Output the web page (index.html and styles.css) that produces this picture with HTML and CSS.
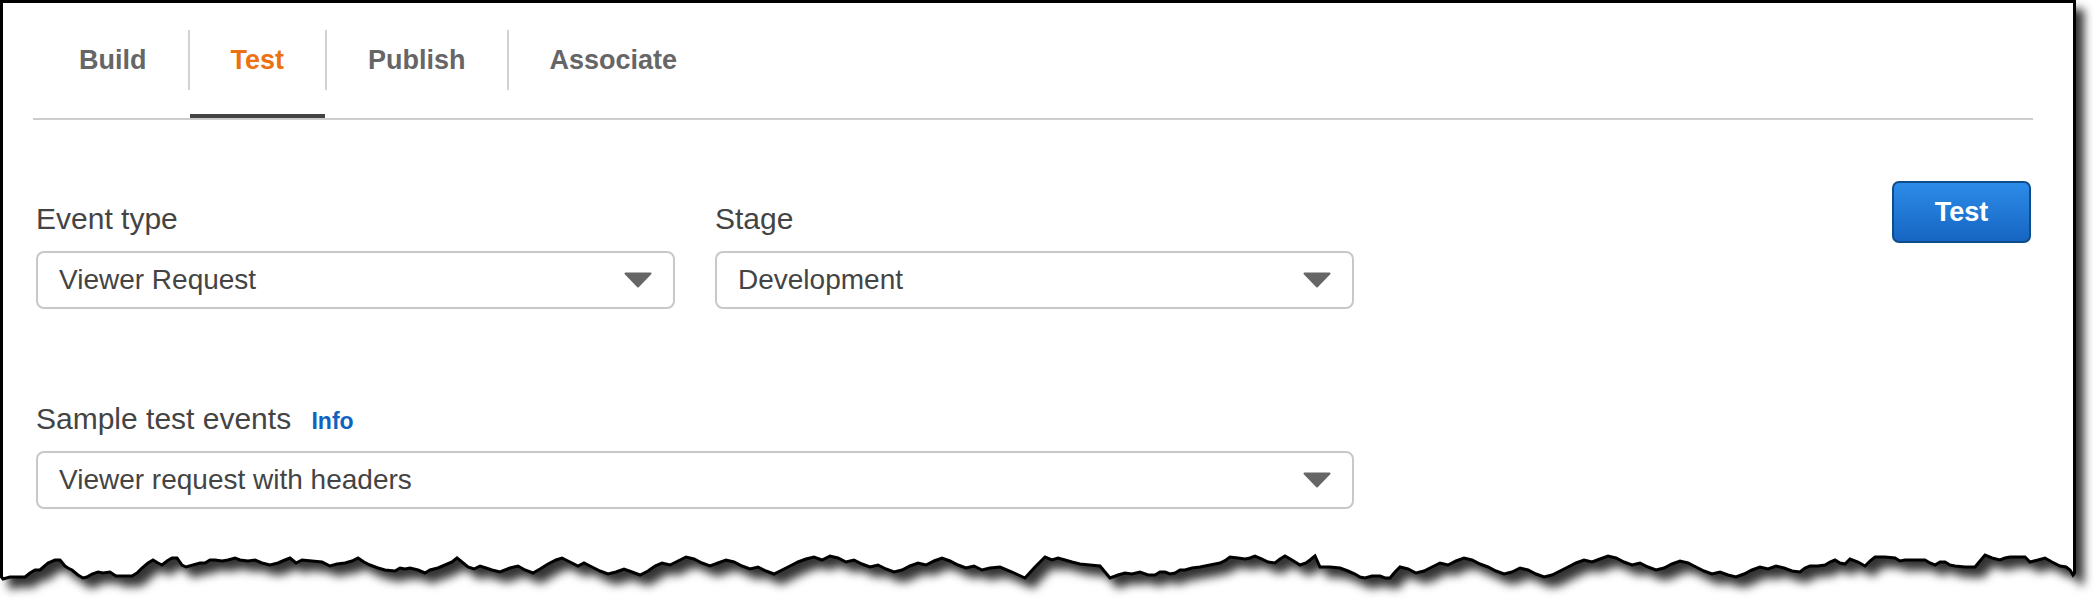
FILE: index.html
```html
<!DOCTYPE html>
<html lang="en">
<head>
<meta charset="utf-8">
<title>Function test</title>
<link rel="stylesheet" href="styles.css">
</head>
<body>
<div class="paper">
  <svg class="paper-bg" width="2096" height="602" viewBox="0 0 2096 602" aria-hidden="true">
    <defs>
      <filter id="shadow" x="-5%" y="-5%" width="115%" height="130%">
        <feDropShadow dx="8" dy="9" stdDeviation="5" flood-color="#000" flood-opacity="0.8"/>
      </filter>
    </defs>
    <path filter="url(#shadow)" fill="#fff" stroke="#000" stroke-width="3" stroke-linejoin="miter"
      d="M2074.5 1.5 H1.5 V577 L3 579 L10 577 L25 577 L30 573 L35 570 L40 570 L48 563 L55 560 L60 560 L65 566 L68 568 L72 570 L78 575 L83 578 L87 577 L92 574 L98 572 L103 573 L110 572 L116 576 L132 576 L137 573 L142 568 L148 563 L153 560 L158 563 L162 565 L167 561 L172 558 L177 558 L182 565 L186 567 L200 563 L205 563 L210 560 L215 560 L222 561 L228 560 L235 558 L240 560 L248 561 L255 560 L262 563 L270 565 L278 563 L285 560 L290 558 L296 563 L302 560 L312 561 L322 562 L330 566 L337 564 L345 563 L352 561 L358 558 L364 562 L370 565 L378 568 L385 570 L395 571 L400 568 L405 569 L410 568 L418 570 L425 573 L430 570 L438 568 L445 565 L452 562 L457 558 L462 562 L468 567 L474 569 L480 566 L486 568 L492 570 L500 572 L510 568 L518 566 L525 570 L533 573 L540 569 L548 564 L556 560 L562 558 L570 562 L578 566 L584 563 L592 567 L600 571 L608 574 L616 572 L624 569 L632 572 L640 575 L648 571 L655 566 L662 563 L670 565 L678 561 L686 557 L694 559 L702 563 L710 566 L718 563 L726 560 L734 562 L742 566 L750 569 L758 567 L766 571 L774 574 L782 570 L790 566 L798 562 L806 559 L814 557 L822 560 L830 556 L838 558 L846 562 L854 560 L862 564 L870 567 L878 565 L886 569 L894 572 L902 570 L910 566 L918 563 L926 565 L934 561 L942 558 L950 561 L958 565 L966 568 L974 566 L982 570 L990 568 L1000 567 L1012 572 L1025 578 L1035 567 L1045 557 L1052 560 L1058 558 L1065 560 L1072 562 L1080 564 L1090 565 L1100 566 L1105 572 L1110 578 L1118 575 L1125 573 L1132 574 L1140 572 L1148 575 L1155 575 L1160 572 L1165 572 L1170 574 L1175 573 L1180 570 L1185 570 L1192 568 L1200 567 L1210 565 L1220 563 L1226 560 L1230 557 L1238 558 L1245 559 L1250 558 L1255 556 L1262 559 L1268 562 L1275 563 L1280 559 L1285 556 L1292 560 L1300 565 L1306 563 L1310 560 L1315 556 L1320 567 L1330 567 L1340 568 L1348 571 L1355 574 L1360 577 L1365 578 L1372 576 L1380 576 L1385 578 L1390 578 L1395 572 L1400 567 L1408 569 L1416 573 L1424 571 L1432 567 L1440 563 L1448 565 L1456 561 L1464 558 L1472 560 L1480 564 L1488 567 L1496 571 L1504 574 L1512 572 L1520 568 L1528 570 L1536 574 L1544 577 L1552 575 L1560 571 L1568 567 L1576 563 L1584 560 L1592 562 L1600 559 L1608 556 L1616 558 L1624 562 L1632 565 L1640 563 L1648 567 L1656 570 L1664 568 L1672 564 L1680 561 L1688 563 L1696 567 L1704 571 L1712 574 L1720 572 L1728 575 L1736 577 L1744 574 L1752 570 L1760 567 L1768 569 L1776 566 L1784 568 L1792 571 L1800 572 L1805 568 L1810 566 L1818 566 L1825 565 L1830 562 L1835 560 L1840 563 L1845 564 L1850 559 L1858 562 L1865 566 L1870 561 L1875 557 L1885 557 L1895 558 L1900 561 L1905 560 L1915 560 L1925 560 L1930 563 L1935 565 L1940 562 L1945 562 L1950 565 L1955 566 L1965 567 L1975 567 L1980 561 L1985 555 L1992 558 L2000 560 L2005 558 L2010 557 L2018 557 L2025 557 L2030 562 L2038 560 L2045 558 L2052 562 L2060 566 L2066 567 L2070 570 L2073 575 L2074.5 573 Z"/>
  </svg>

  <div class="content">
    <nav class="tabs">
      <div class="tab">Build</div>
      <div class="tab active">Test</div>
      <div class="tab">Publish</div>
      <div class="tab">Associate</div>
    </nav>

    <section class="form">
      <div class="fields">
        <div class="field">
          <div class="label">Event type</div>
          <div class="select">
            <span>Viewer Request</span>
            <svg class="caret" width="28" height="16" viewBox="0 0 28 16" aria-hidden="true"><path d="M1.5 1.5 H26.5 L14 14.5 Z" fill="#666" stroke="#666" stroke-width="2" stroke-linejoin="round"/></svg>
          </div>
        </div>
        <div class="field">
          <div class="label">Stage</div>
          <div class="select">
            <span>Development</span>
            <svg class="caret" width="28" height="16" viewBox="0 0 28 16" aria-hidden="true"><path d="M1.5 1.5 H26.5 L14 14.5 Z" fill="#666" stroke="#666" stroke-width="2" stroke-linejoin="round"/></svg>
          </div>
        </div>
        <div class="field wide">
          <div class="label">Sample test events <a class="info">Info</a></div>
          <div class="select">
            <span>Viewer request with headers</span>
            <svg class="caret" width="28" height="16" viewBox="0 0 28 16" aria-hidden="true"><path d="M1.5 1.5 H26.5 L14 14.5 Z" fill="#666" stroke="#666" stroke-width="2" stroke-linejoin="round"/></svg>
          </div>
        </div>
      </div>
      <button class="btn" type="button">Test</button>
    </section>
  </div>
</div>
</body>
</html>
```

FILE: styles.css
```css
html, body {
  margin: 0;
  padding: 0;
  background: #fff;
  overflow: hidden;
}

body {
  font-family: "Liberation Sans", Arial, Helvetica, sans-serif;
  color: #444;
}

.paper {
  position: relative;
  width: 2096px;
  height: 602px;
}

.paper-bg {
  position: absolute;
  left: 0;
  top: 0;
  z-index: 0;
}

.content {
  position: relative;
  z-index: 1;
  width: 2000px;
  padding: 30px 0 0 33px;
}

/* Tabs */
.tabs {
  display: flex;
  height: 88px;
  padding-left: 5px;
  border-bottom: 2px solid #cdcdcd;
}

.tab {
  position: relative;
  box-sizing: border-box;
  height: 88px;
  padding: 0 41px;
  font-size: 27px;
  font-weight: bold;
  line-height: 60px;
  color: #666;
}

.tab + .tab {
  margin-left: 2px;
}

.tab + .tab::before {
  content: "";
  position: absolute;
  left: -2px;
  top: 0;
  width: 2px;
  height: 60px;
  background: #d2d2d2;
}

.tab.active {
  color: #ec7211;
  border-bottom: 4px solid #444;
}

/* Form */
.form {
  display: flex;
  justify-content: space-between;
  align-items: flex-start;
  padding-top: 61px;
  padding-left: 3px;
}

.fields {
  display: grid;
  grid-template-columns: 639px 639px;
  column-gap: 40px;
  row-gap: 93px;
  margin-top: 21px;
}

.field.wide {
  grid-column: 1 / 3;
}

.label {
  font-size: 30px;
  line-height: 34px;
  color: #444;
  margin-bottom: 15px;
  white-space: nowrap;
}

.info {
  margin-left: 12px;
  font-size: 23px;
  font-weight: bold;
  line-height: 1;
  color: #0f63bf;
}

.select {
  box-sizing: border-box;
  height: 58px;
  display: flex;
  align-items: center;
  justify-content: space-between;
  padding: 0 21px;
  border: 2px solid #c8c8c8;
  border-radius: 8px;
  background: #fff;
  font-size: 28px;
  color: #444;
}

.caret {
  display: block;
  flex: none;
}

.btn {
  box-sizing: border-box;
  width: 139px;
  height: 62px;
  margin-right: 2px;
  padding: 0;
  border: 2px solid #0d4d8c;
  border-radius: 7px;
  background: linear-gradient(#2c8ce8, #1765c2);
  color: #fff;
  font-family: "Liberation Sans", Arial, Helvetica, sans-serif;
  font-size: 27px;
  font-weight: bold;
  line-height: 58px;
}
```
